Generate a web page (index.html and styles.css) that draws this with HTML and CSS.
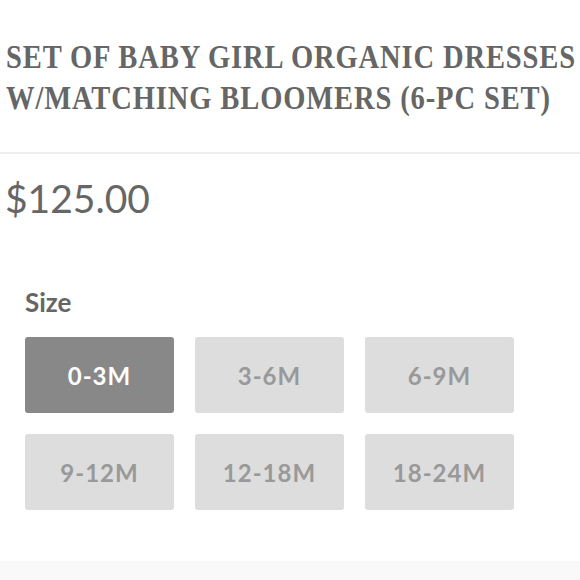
FILE: index.html
```html
<!DOCTYPE html>
<html>
<head>
<meta charset="utf-8">
<link rel="stylesheet" href="styles.css">
</head>
<body>
<div class="page">
  <header class="head">
    <h1 class="title"><span class="line">SET OF BABY GIRL ORGANIC DRESSES</span><span class="line">W/MATCHING BLOOMERS (6-PC SET)</span></h1>
  </header>
  <div class="divider"></div>
  <div class="price">$125.00</div>
  <section class="options">
    <div class="label">Size</div>
    <div class="grid">
      <button class="opt selected">0-3M</button>
      <button class="opt">3-6M</button>
      <button class="opt">6-9M</button>
      <button class="opt">9-12M</button>
      <button class="opt">12-18M</button>
      <button class="opt">18-24M</button>
    </div>
  </section>
  <div class="spacer"></div>
  <div class="footer-band"></div>
</div>
</body>
</html>
```
FILE: styles.css
```css
html, body {
  margin: 0;
  padding: 0;
  background: #fff;
}
.page {
  width: 580px;
  height: 580px;
  display: flex;
  flex-direction: column;
  overflow: hidden;
}
.head {
  padding: 37px 0 0 6px;
  height: 114px;
  box-sizing: border-box;
}
.title {
  margin: 0;
  font-family: "Liberation Serif", serif;
  font-weight: bold;
  font-size: 33px;
  line-height: 41px;
  color: #666;
  white-space: nowrap;
  letter-spacing: 1px;
  transform: scaleX(0.865);
  transform-origin: left top;
}
.line {
  display: block;
}
.divider {
  margin-top: 38px;
  height: 2px;
  background: #eeeeee;
}
.price {
  padding: 20px 0 0 5px;
  font-family: "Lato", sans-serif;
  font-size: 39px;
  line-height: 48px;
  color: #666;
}
.options {
  padding: 65px 0 0 25px;
}
.label {
  font-family: "Lato", sans-serif;
  font-weight: bold;
  font-size: 26px;
  line-height: 30px;
  color: #666;
}
.grid {
  margin-top: 20px;
  display: grid;
  grid-template-columns: repeat(3, 149px);
  grid-auto-rows: 76px;
  column-gap: 21px;
  row-gap: 21px;
}
.opt {
  border: none;
  border-radius: 3px;
  background: #dddddd;
  color: #999999;
  font-family: "Lato", sans-serif;
  font-weight: bold;
  font-size: 24px;
  letter-spacing: 1px;
  padding: 0;
  margin: 0;
}
.opt.selected {
  background: #888888;
  color: #fff;
}
.spacer {
  flex: 1;
}
.footer-band {
  height: 19px;
  background: #f9f9f9;
}
```
